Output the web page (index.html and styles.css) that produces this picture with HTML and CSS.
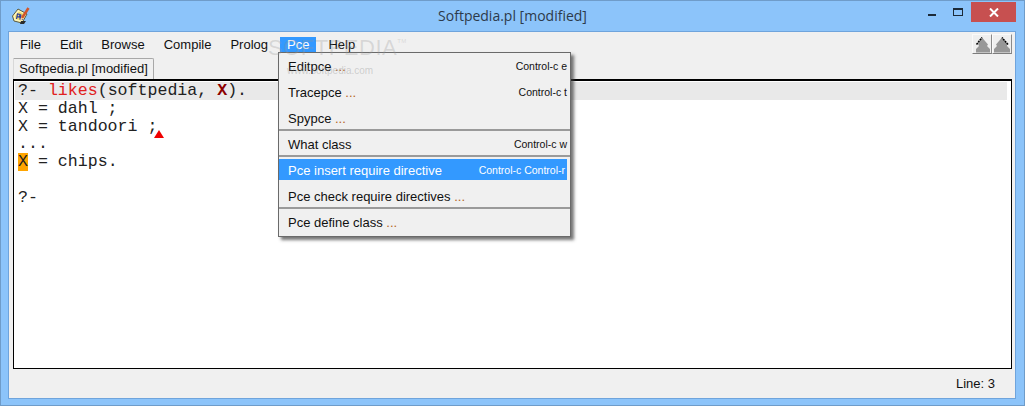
FILE: index.html
```html
<!DOCTYPE html>
<html lang="en">
<head>
<meta charset="utf-8">
<title>Softpedia.pl [modified]</title>
<link rel="stylesheet" href="styles.css">
</head>
<body>
<div class="window">
  <header class="titlebar">
    <div class="app-icon">
      <svg width="18" height="18" viewBox="0 0 18 18">
        <path d="M0.500 9 L6 2 L15 7 L10 16 L2 14 Z" fill="#fff6b8" stroke="#5a5a40" stroke-width="1"/>
        <path d="M3 9 L7 4.500 L12.500 7.500 L9 13.500 L3.500 12 Z" fill="#f2dc6c"/>
        <path d="M4.500 12 L5.500 7 L8 7.500 L7.500 10 L5.200 9.600" fill="none" stroke="#2c3c9c" stroke-width="1.200"/>
        <path d="M9 7.500 L8 12 L11 12.500" fill="none" stroke="#2c3c9c" stroke-width="1.200"/>
        <path d="M16.500 1 L10 11" stroke="#d2562a" stroke-width="2.600"/>
        <path d="M9 10.500 L8 14 L11 12 Z" fill="#f0d0a0"/>
        <path d="M9 14 L14 14 L12 17 L8 17 Z" fill="#2a2a2a"/>
      </svg>
    </div>
    <div class="title">Softpedia.pl [modified]</div>
    <div class="controls">
      <div class="ctl"><span class="ctl-min"></span></div>
      <div class="ctl"><span class="ctl-max"></span></div>
      <div class="ctl-close">
        <svg width="10" height="9" viewBox="0 0 10 9"><path d="M1 0.500 L9 8.500 M9 0.500 L1 8.500" stroke="#fff" stroke-width="2"/></svg>
      </div>
    </div>
  </header>

  <div class="client">
    <nav class="menubar">
      <span class="menu-item">File</span>
      <span class="menu-item">Edit</span>
      <span class="menu-item">Browse</span>
      <span class="menu-item">Compile</span>
      <span class="menu-item">Prolog</span>
      <span class="menu-item is-open">Pce</span>
      <span class="menu-item">Help</span>
      <div class="nav-buttons">
        <button class="nav-btn">
          <svg width="19" height="19" viewBox="0 0 19 19">
            <path d="M9 2.500 L15 9.500 L14 11 L17 14 L17 17.500 L3 17.500 L3 14 L6 11 L5 9 Z" fill="#979797"/>
            <path d="M3.500 9.500 L9 2.500" stroke="#000" stroke-width="1.500" stroke-dasharray="2 0.700"/>
          </svg>
        </button>
        <button class="nav-btn">
          <svg width="19" height="19" viewBox="0 0 19 19">
            <path d="M9 2.500 L3 9.500 L4 11 L1 14 L1 17.500 L17 17.500 L17 14 L14 11 L14 9 Z" fill="#979797"/>
            <path d="M15 9.500 L9 2.500" stroke="#000" stroke-width="1.500" stroke-dasharray="2 0.700"/>
          </svg>
        </button>
      </div>
    </nav>

    <div class="tabs"><span class="tab">Softpedia.pl [modified]</span></div>

    <main class="editor">
      <div class="line current"><span>?- </span><span class="goal">likes</span>(softpedia, <span class="var">X</span>).</div>
      <div class="line">X = dahl ;</div>
      <div class="line">X = tandoori ;<span class="caret"></span></div>
      <div class="line">...</div>
      <div class="line"><span class="mark">X</span> = chips.</div>
      <div class="line">&nbsp;</div>
      <div class="line">?-</div>
    </main>

    <footer class="status">Line: 3</footer>

    <div class="dropdown">
      <div class="drop-row"><span>Editpce <i class="dots">...</i></span><kbd>Control-c e</kbd></div>
      <div class="drop-row"><span>Tracepce <i class="dots">...</i></span><kbd>Control-c t</kbd></div>
      <div class="drop-row sep"><span>Spypce <i class="dots">...</i></span></div>
      <div class="drop-row sep"><span>What class</span><kbd>Control-c w</kbd></div>
      <div class="drop-row active"><span>Pce insert require directive</span><kbd>Control-c Control-r</kbd></div>
      <div class="drop-row sep"><span>Pce check require directives <i class="dots">...</i></span></div>
      <div class="drop-row"><span>Pce define class <i class="dots">...</i></span></div>
    </div>

    <div class="wm-large">SOFTPEDIA<sup class="tm">TM</sup></div>
    <div class="wm-small">www.softpedia.com</div>
  </div>
</div>
</body>
</html>
```

FILE: styles.css
```css
* { box-sizing: border-box; }

html, body {
  margin: 0;
  padding: 0;
  width: 1025px;
  height: 406px;
  overflow: hidden;
  background: #fff;
}

body {
  font-family: "Liberation Sans", Arial, sans-serif;
  font-size: 13px;
  color: #111;
}

.window {
  width: 1025px;
  height: 406px;
  display: flex;
  flex-direction: column;
  background: #8cc4fa;
  border: 1px solid #6f9cc9;
}

.titlebar {
  height: 30px;
  flex: none;
  display: grid;
  grid-template-columns: 1fr auto 1fr;
  align-items: start;
}

.app-icon {
  padding: 6px 0 0 11px;
  height: 24px;
}

.title {
  font-family: "Open Sans", "Noto Sans", sans-serif;
  font-size: 14px;
  line-height: 18px;
  padding-top: 6px;
  color: #2c3a4a;
}

.controls {
  display: flex;
  justify-content: flex-end;
  align-items: flex-start;
  padding-right: 8px;
}

.ctl {
  width: 26px;
  height: 19px;
  display: flex;
  align-items: center;
  justify-content: center;
}

.ctl-min {
  display: block;
  width: 8px;
  height: 2px;
  margin-top: 9px;
  background: #1c2a38;
}

.ctl-max {
  display: block;
  width: 10px;
  height: 8px;
  margin-top: 3px;
  border: 1px solid #1c2a38;
  border-top-width: 2px;
}

.ctl-close {
  width: 45px;
  height: 20px;
  margin-top: 1px;
  background: #c75050;
  display: flex;
  align-items: center;
  justify-content: center;
}

.client {
  position: relative;
  flex: 1;
  min-height: 0;
  margin: 0 8px 6px 7px;
  padding: 5px 3px 0 4px;
  display: flex;
  flex-direction: column;
  background: #f0f0f0;
  border: 1px solid #6fa4dc;
}

.menubar {
  display: flex;
  gap: 5px;
  height: 16px;
  flex: none;
  align-items: center;
}

.menu-item {
  padding: 0 7px;
  height: 16px;
  line-height: 16px;
}

.menu-item.is-open {
  background: #3399ff;
  color: #fff;
}

.nav-buttons {
  margin-left: auto;
  display: flex;
  margin-top: -2px;
}

.nav-btn {
  width: 20px;
  height: 20px;
  padding: 0;
  background: #efefef;
  border: none;
  border-top: 1px solid #fafafa;
  border-left: 1px solid #fafafa;
  border-bottom: 1px solid #7d7d7d;
  border-right: 1px solid #8a8a8a;
  display: block;
}

.nav-btn svg { display: block; }

.tabs {
  display: flex;
  flex: none;
  height: 21px;
  margin-top: 5px;
}

.tab {
  width: 141px;
  height: 21px;
  line-height: 19px;
  font-size: 13px;
  text-align: center;
  border: 1px solid #a8a8a8;
  border-left: 1px solid #d8d8d8;
  border-bottom: none;
  border-top-right-radius: 2px;
}

.editor {
  flex: 1;
  min-height: 0;
  background: #fff;
  border: 1px solid #000;
  border-width: 2px 1px 1px 1px;
  padding: 1px 4px 0 1px;
  font-family: "Liberation Mono", "Courier New", monospace;
  font-size: 16.600px;
  color: #222;
}

.line {
  position: relative;
  height: 17.800px;
  line-height: 18px;
  padding-left: 3px;
  white-space: pre;
}

.line.current { background: #e9e9e9; }

.goal { color: #e02020; }

.var {
  color: #8b0000;
  font-weight: bold;
}

.mark {
  background: #ffa500;
  display: inline-block;
  height: 18px;
}

.caret {
  position: absolute;
  left: 139px;
  top: 12px;
  width: 0;
  height: 0;
  border-left: 5px solid transparent;
  border-right: 5px solid transparent;
  border-bottom: 8px solid #f00000;
}

.status {
  height: 29px;
  flex: none;
  line-height: 30px;
  text-align: right;
  padding-right: 17px;
  font-size: 13px;
}

.dropdown {
  position: absolute;
  left: 269px;
  top: 20px;
  width: 293px;
  height: 185px;
  background: #f0f0f0;
  border: 1px solid #6a6a6a;
  box-shadow: 3px 3px 3px rgba(60, 60, 60, 0.7);
  display: flex;
  flex-direction: column;
}

.drop-row {
  height: 26px;
  flex: none;
  display: flex;
  justify-content: space-between;
  align-items: center;
  padding: 0 3px 0 8px;
  white-space: nowrap;
}

.drop-row > span { margin-left: 1px; }

.drop-row.sep { box-shadow: inset 0 -2px 0 #9a9a9a; }

.drop-row.active {
  background: #3399ff;
  color: #fff;
  height: 21px;
  margin: 2px 3px 3px 0;
  padding-top: 1px;
  padding-right: 2px;
}

.drop-row kbd {
  font-family: "Liberation Sans", Arial, sans-serif;
  font-size: 10.500px;
  color: #111;
}

.drop-row.active kbd { color: #fff; }

.dots {
  font-style: normal;
  color: #b5651d;
}

.wm-large {
  position: absolute;
  left: 259px;
  top: 5px;
  font-size: 22px;
  line-height: 22px;
  letter-spacing: 0.5px;
  color: rgba(150, 150, 150, 0.28);
  pointer-events: none;
}

.tm {
  font-size: 6px;
  vertical-align: 12px;
  line-height: 0;
}

.wm-small {
  position: absolute;
  left: 278px;
  top: 33px;
  font-size: 10px;
  line-height: 12px;
  color: rgba(150, 150, 150, 0.4);
  pointer-events: none;
}
```
